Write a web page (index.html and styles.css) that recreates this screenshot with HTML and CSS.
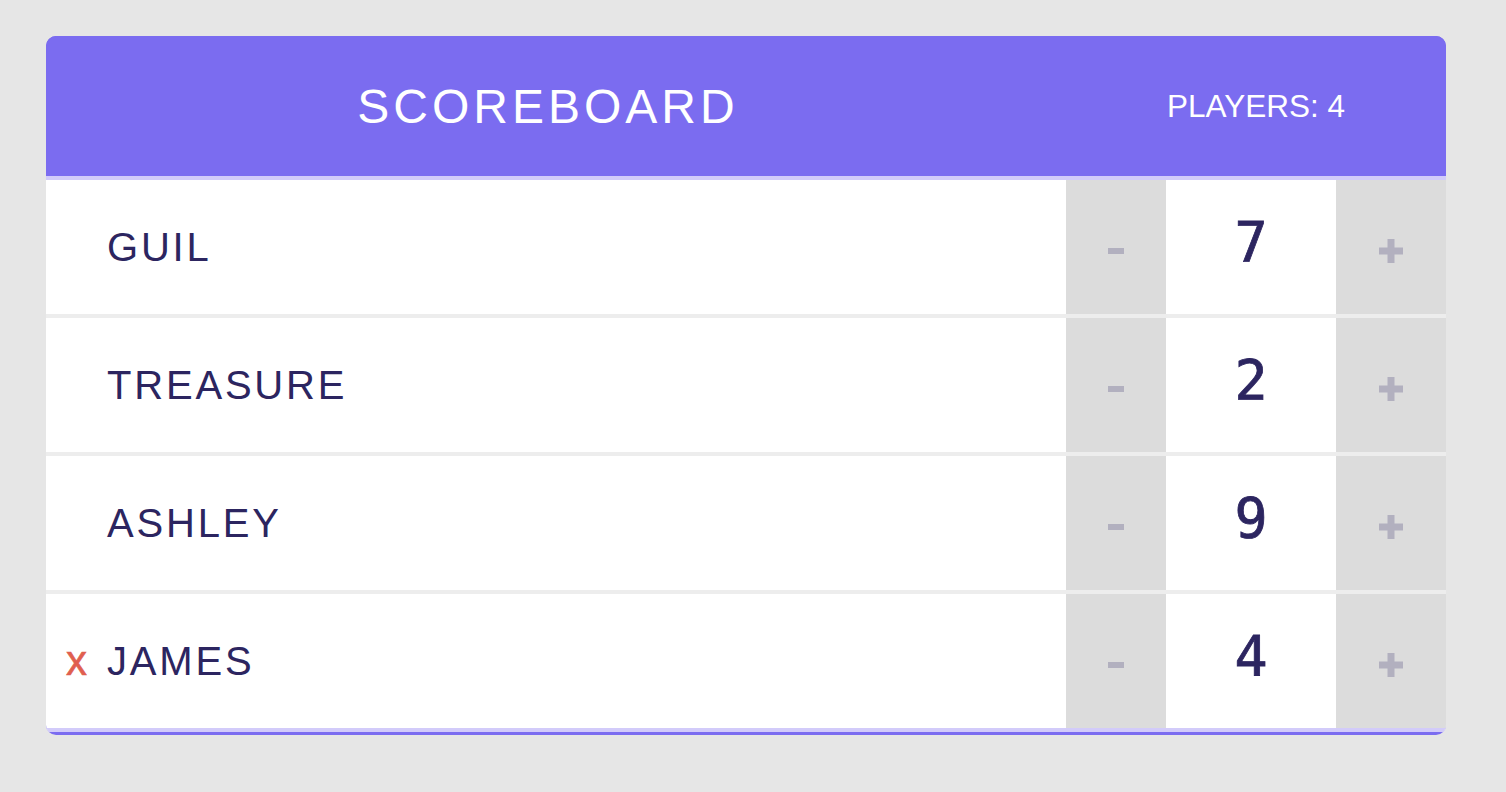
FILE: index.html
```html
<!DOCTYPE html>
<html>
<head>
<meta charset="utf-8">
<link rel="stylesheet" href="styles.css">
</head>
<body>
<div class="scoreboard">
  <header class="header">
    <h1 class="title">SCOREBOARD</h1>
    <div class="stats">PLAYERS: 4</div>
  </header>
  <div class="player">
    <div class="name"><span class="remove hidden">x</span><span class="pname">GUIL</span></div>
    <button class="btn minus"><svg width="16" height="6" viewBox="0 0 16 6"><rect width="16" height="6" fill="#b2b0bf"/></svg></button>
    <div class="score">7</div>
    <button class="btn plus"><svg width="24" height="24" viewBox="0 0 24 24"><rect x="8.5" y="0" width="7" height="24" fill="#b2b0bf"/><rect x="0" y="8.5" width="24" height="7" fill="#b2b0bf"/></svg></button>
  </div>
  <div class="player">
    <div class="name"><span class="remove hidden">x</span><span class="pname">TREASURE</span></div>
    <button class="btn minus"><svg width="16" height="6" viewBox="0 0 16 6"><rect width="16" height="6" fill="#b2b0bf"/></svg></button>
    <div class="score">2</div>
    <button class="btn plus"><svg width="24" height="24" viewBox="0 0 24 24"><rect x="8.5" y="0" width="7" height="24" fill="#b2b0bf"/><rect x="0" y="8.5" width="24" height="7" fill="#b2b0bf"/></svg></button>
  </div>
  <div class="player">
    <div class="name"><span class="remove hidden">x</span><span class="pname">ASHLEY</span></div>
    <button class="btn minus"><svg width="16" height="6" viewBox="0 0 16 6"><rect width="16" height="6" fill="#b2b0bf"/></svg></button>
    <div class="score">9</div>
    <button class="btn plus"><svg width="24" height="24" viewBox="0 0 24 24"><rect x="8.5" y="0" width="7" height="24" fill="#b2b0bf"/><rect x="0" y="8.5" width="24" height="7" fill="#b2b0bf"/></svg></button>
  </div>
  <div class="player last">
    <div class="name"><span class="remove">x</span><span class="pname">JAMES</span></div>
    <button class="btn minus"><svg width="16" height="6" viewBox="0 0 16 6"><rect width="16" height="6" fill="#b2b0bf"/></svg></button>
    <div class="score">4</div>
    <button class="btn plus"><svg width="24" height="24" viewBox="0 0 24 24"><rect x="8.5" y="0" width="7" height="24" fill="#b2b0bf"/><rect x="0" y="8.5" width="24" height="7" fill="#b2b0bf"/></svg></button>
  </div>
</div>
</body>
</html>
```
FILE: styles.css
```css
html, body {
  margin: 0;
  padding: 0;
  background: #e6e6e6;
  font-family: "Liberation Sans", Arial, sans-serif;
}

body {
  padding: 36px 0 0 46px;
}

.scoreboard {
  width: 1400px;
  background: #7b6cf0;
  border-radius: 10px;
  overflow: hidden;
  padding-bottom: 3px;
}

.header {
  display: flex;
  align-items: center;
  height: 140px;
  background: #7b6cf0;
  border-bottom: 4px solid #d2cbfa;
  color: #fff;
}

.title {
  flex: 1;
  margin: 0;
  text-align: center;
  font-weight: normal;
  font-size: 48px;
  letter-spacing: 4px;
}

.stats {
  width: 295px;
  padding-right: 101px;
  text-align: right;
  font-size: 31.5px;
}

.player {
  display: grid;
  grid-template-columns: 1fr 100px 170px 110px;
  height: 134px;
  background: #fff;
  border-bottom: 4px solid #ededed;
}

.player.last {
  border-bottom-color: #d2cbfa;
}

.name {
  display: flex;
  align-items: baseline;
  align-self: center;
  color: #2c2560;
  font-size: 40px;
  letter-spacing: 2.8px;
  padding-left: 20px;
}

.remove {
  width: 41px;
  color: #e05f4f;
  font-size: 42px;
  letter-spacing: 0;
  -webkit-text-stroke: 0.6px #e05f4f;
}

.hidden {
  visibility: hidden;
}

.btn {
  border: 0;
  margin: 0;
  padding: 8px 0 0;
  background: #dcdcdc;
  display: flex;
  align-items: center;
  justify-content: center;
}

.btn svg {
  display: block;
}

.score {
  display: flex;
  align-items: center;
  justify-content: center;
  padding-bottom: 10px;
  font-family: "DejaVu Sans Mono", monospace;
  font-size: 55px;
  color: #2c2560;
  -webkit-text-stroke: 0.8px #2c2560;
}
```
